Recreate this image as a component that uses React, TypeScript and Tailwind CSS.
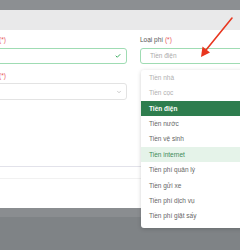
import { Check, ChevronDown } from 'lucide-react';

const options = [
  { label: 'Tiền nhà', state: 'disabled' },
  { label: 'Tiền cọc', state: 'disabled' },
  { label: 'Tiền điện', state: 'selected' },
  { label: 'Tiền nước', state: '' },
  { label: 'Tiền vệ sinh', state: '' },
  { label: 'Tiền internet', state: 'active' },
  { label: 'Tiền phí quản lý', state: '' },
  { label: 'Tiền gửi xe', state: '' },
  { label: 'Tiền phí dịch vụ', state: '' },
  { label: 'Tiền phí giặt sấy', state: '' },
];

function Label({ text }: { text?: string }) {
  return (
    <div className="h-[8px] text-[6.5px] leading-[8px] text-[#555]">
      {text && <>{text} </>}
      <span className="text-[#e8585a]">(*)</span>
    </div>
  );
}

export default function App() {
  return (
    <div
      className="relative h-[250px] w-[240px] overflow-hidden bg-[#7f8386]"
      style={{ fontFamily: '"Liberation Sans", Arial, sans-serif' }}
    >
      <div className="h-[10px] bg-[#8c8f92]" />
      <div className="bg-white">
        <div className="h-[20px] bg-[#e9e9ea]" />
        <div className="flex gap-[13px] pt-[6px]">
          <div className="-ml-[10px] w-[137px] shrink-0">
            <div className="pl-[9px]">
              <Label />
            </div>
            <div className="mt-[4px] flex h-[16px] items-center justify-end rounded-[3px] border border-[#9fdcb3] pr-[5px]">
              <Check className="h-[6px] w-[6px] text-[#3fae62]" strokeWidth={4} />
            </div>
            <div className="mt-[8px] pl-[9px]">
              <Label />
            </div>
            <div className="mt-[3px] flex h-[17px] items-center justify-end rounded-[3px] border border-[#e3e3e3] pr-[4px]">
              <ChevronDown className="h-[6px] w-[6px] text-[#999]" strokeWidth={2} />
            </div>
          </div>
          <div className="w-[110px] shrink-0">
            <Label text="Loại phí" />
            <div className="mt-[4px] flex h-[16px] items-center rounded-[3px] border border-[#9fdcb3] pl-[9px] text-[6.5px] text-[#aaa]">
              Tiền điện
            </div>
          </div>
        </div>
        <div className="h-[66px]" />
        <div className="h-[12px] border-t border-[#e2e2ea]" />
        <div className="h-[30px] border-t border-[#f1f1f1]" />
      </div>
      <div className="h-[9px] bg-[#8a8d90]" />

      <div className="absolute left-[141px] top-[70px] w-[110px] rounded-[3px] bg-white pb-[4px] shadow-[0_1px_4px_rgba(0,0,0,0.18)]">
        {options.map((o) => (
          <div
            key={o.label}
            className={
              'flex h-[15.4px] items-center pl-[8px] text-[6.5px] ' +
              (o.state === 'selected'
                ? 'bg-[#2e7d4e] font-bold text-white'
                : o.state === 'active'
                  ? 'bg-[#e5f3e9] text-[#3b8a57]'
                  : o.state === 'disabled'
                    ? 'text-[#b0b0b0]'
                    : 'text-[#666]')
            }
          >
            {o.label}
          </div>
        ))}
      </div>

      <svg className="absolute left-0 top-0" width="240" height="250" viewBox="0 0 240 250">
        <line x1="232" y1="18" x2="206" y2="50" stroke="#e8361f" strokeWidth="1.6" strokeLinecap="round" />
        <polygon points="201,57 202.5,46.5 210,52.5" fill="#e8361f" />
      </svg>
    </div>
  );
}
